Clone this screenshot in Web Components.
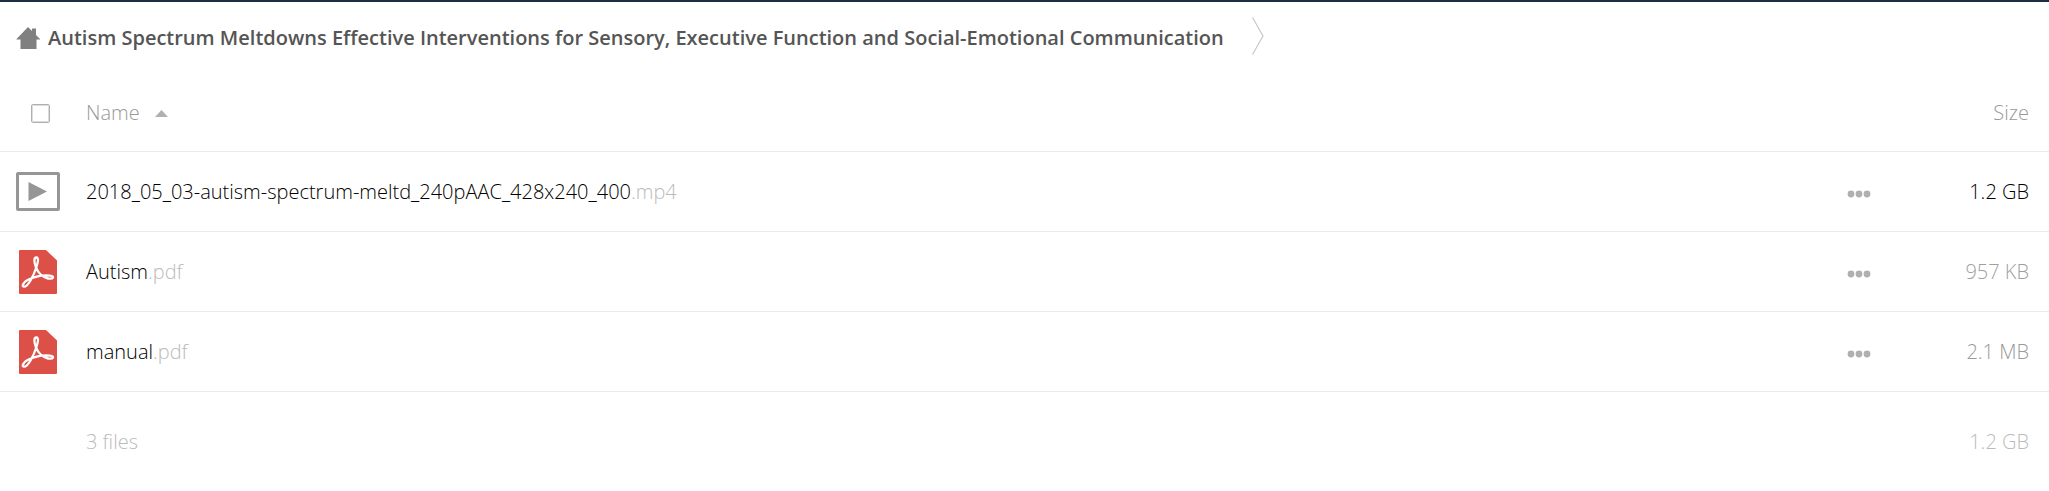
<!DOCTYPE html>
<html lang="en">
<head>
<meta charset="utf-8">
<title>Files</title>
<style>
  body {
    margin: 0;
    background: #fff;
    font-family: "Open Sans", "Noto Sans", sans-serif;
    font-size: 20px;
    font-weight: 300;
    line-height: 28px;
  }
</style>
</head>
<body>

<files-app>
  <bread-crumb slot="path" href="#">Autism Spectrum Meltdowns Effective Interventions for Sensory, Executive Function and Social-Emotional Communication</bread-crumb>
  <file-list summary="3 files" total="1.2 GB">
    <file-entry name="2018_05_03-autism-spectrum-meltd_240pAAC_428x240_400" ext=".mp4" kind="video" size="1.2 GB" color="#000"></file-entry>
    <file-entry name="Autism" ext=".pdf" kind="pdf" size="957 KB" color="#a0a0a0"></file-entry>
    <file-entry name="manual" ext=".pdf" kind="pdf" size="2.1 MB" color="#9a9a9a"></file-entry>
  </file-list>
</files-app>

<script>
class FilesApp extends HTMLElement {
  constructor() {
    super();
    this.attachShadow({mode: 'open'}).innerHTML = `
      <style>
        :host {
          display: block;
          border-top: 2px solid #1d2d44;
        }
        nav {
          display: flex;
          padding: 15px 16px 20px;
        }
      </style>
      <nav aria-label="Path"><slot name="path"></slot></nav>
      <main><slot></slot></main>
    `;
  }
}

class BreadCrumb extends HTMLElement {
  constructor() {
    super();
    this.attachShadow({mode: 'open'}).innerHTML = `
      <style>
        :host {
          display: flex;
          align-items: center;
        }
        a {
          display: flex;
          align-items: center;
          gap: 8px;
          padding-top: 3px;
          color: #555;
          font-weight: 600;
          text-decoration: none;
        }
        svg { display: block; flex: none; }
        .arrow { margin-left: 28px; }
      </style>
      <a>
        <svg width="24" height="24" viewBox="0 0 24 24" aria-hidden="true">
          <path fill="#808080" d="M12 1l4 4V2.500h4V9l4 4v.5h-3.500V23h-16v-9.500H.5V13z"/>
        </svg>
        <span><slot></slot></span>
      </a>
      <svg class="arrow" width="12" height="38" viewBox="0 0 12 38" aria-hidden="true">
        <path fill="none" stroke="#c8c8c8" stroke-width="1.200" d="M.5 .5l10.500 18.500L.5 37.500"/>
      </svg>
    `;
    this.shadowRoot.querySelector('a').href = this.getAttribute('href') || '#';
  }
}

class FileIcon extends HTMLElement {
  constructor() {
    super();
    this.attachShadow({mode: 'open'});
  }

  connectedCallback() {
    const video = `
      <svg width="44" height="39" viewBox="0 0 44 39">
        <rect x="1.500" y="1.500" width="41" height="36" rx=".5" fill="none" stroke="#969696" stroke-width="3"/>
        <path fill="#969696" d="M12.500 10v19l18.500-9.500z"/>
      </svg>`;
    const pdf = `
      <svg width="38" height="44" viewBox="0 0 38 44">
        <path fill="#dc5047" d="M1 0h26l11 10.500V43a1 1 0 0 1-1 1H1a1 1 0 0 1-1-1V1a1 1 0 0 1 1-1z"/>
        <path fill="none" stroke="#fff" stroke-width="2.300" stroke-linejoin="round" d="M17.300 7.500c-2.600 0-2.300 4.500-.5 9.500 2.200 5.500 7 10.500 12.200 11.500 5.500 1 7-2.300 2-2.900-7-.8-16.500 1.400-22.500 4.400-5 2.700-6 7-3.200 6.700 4.200-.5 9.500-11.700 12-19.200 2-6 2.500-10 0-10z"/>
      </svg>`;
    this.shadowRoot.innerHTML = `
      <style>
        :host {
          display: flex;
          justify-content: center;
          width: 44px;
        }
        svg { display: block; }
      </style>
      ${this.getAttribute('kind') === 'video' ? video : pdf}
    `;
  }
}

class MoreButton extends HTMLElement {
  constructor() {
    super();
    this.attachShadow({mode: 'open'}).innerHTML = `
      <style>
        :host { display: block; }
        button {
          display: block;
          padding: 8px;
          border: 0;
          background: none;
          cursor: pointer;
        }
        svg { display: block; }
      </style>
      <button type="button" aria-label="Actions">
        <svg width="24" height="8" viewBox="0 0 24 8" fill="#b0b0b0">
          <circle cx="4" cy="4" r="3.400"/>
          <circle cx="12" cy="4" r="3.400"/>
          <circle cx="20" cy="4" r="3.400"/>
        </svg>
      </button>
    `;
  }
}

// Holds the data of one row, the list draws it
class FileEntry extends HTMLElement {
  get row() {
    const get = name => this.getAttribute(name);
    return `
      <tr>
        <td class="icon"><file-icon kind="${get('kind')}"></file-icon></td>
        <td class="name"><a href="#">${get('name')}<span>${get('ext')}</span></a></td>
        <td class="more"><more-button></more-button></td>
        <td class="size" style="color: ${get('color')}">${get('size')}</td>
      </tr>`;
  }
}

class FileList extends HTMLElement {
  constructor() {
    super();
    this.attachShadow({mode: 'open'});
  }

  connectedCallback() {
    const rows = [...this.querySelectorAll('file-entry')].map(entry => entry.row).join('');
    this.shadowRoot.innerHTML = `
      <style>
        :host { display: block; }
        table {
          width: 100%;
          border-collapse: separate;
          border-spacing: 0;
        }
        th, td {
          box-sizing: border-box;
          height: 80px;
          padding: 0;
          border-bottom: 1px solid #ebebeb;
          font-weight: 300;
          text-align: left;
          vertical-align: middle;
        }
        th {
          height: 77px;
          color: #999;
        }
        .icon {
          width: 86px;
          padding-left: 16px;
        }
        .more {
          width: 102px;
          padding-top: 4px;
        }
        .size {
          width: 108px;
          padding-right: 20px;
          text-align: right;
        }
        .name a {
          color: #000;
          text-decoration: none;
        }
        .name span { color: #bbb; }
        input {
          appearance: none;
          display: block;
          width: 19px;
          height: 19px;
          margin: 0 0 0 15px;
          border: 1px solid #b0b0b0;
          outline: 1px solid #dcdcdc;
          outline-offset: -2px;
          border-radius: 2px;
        }
        th button {
          display: flex;
          align-items: center;
          gap: 15px;
          padding: 0;
          border: 0;
          background: none;
          color: inherit;
          font: inherit;
        }
        tfoot td {
          height: 100px;
          border: 0;
          color: #bbb;
        }
      </style>
      <table>
        <thead>
          <tr>
            <th class="icon"><input type="checkbox" aria-label="Select all"></th>
            <th><button type="button">Name
              <svg width="13" height="7" viewBox="0 0 13 7" aria-hidden="true"><path fill="#b0b0b0" d="M0 7l6.500-7L13 7z"/></svg>
            </button></th>
            <th></th>
            <th class="size">Size</th>
          </tr>
        </thead>
        <tbody>${rows}</tbody>
        <tfoot>
          <tr>
            <td></td>
            <td>${this.getAttribute('summary')}</td>
            <td></td>
            <td class="size">${this.getAttribute('total')}</td>
          </tr>
        </tfoot>
      </table>
    `;
  }
}

window.customElements.define('file-icon', FileIcon);
window.customElements.define('more-button', MoreButton);
window.customElements.define('file-entry', FileEntry);
window.customElements.define('file-list', FileList);
window.customElements.define('bread-crumb', BreadCrumb);
window.customElements.define('files-app', FilesApp);
</script>
</body>
</html>
